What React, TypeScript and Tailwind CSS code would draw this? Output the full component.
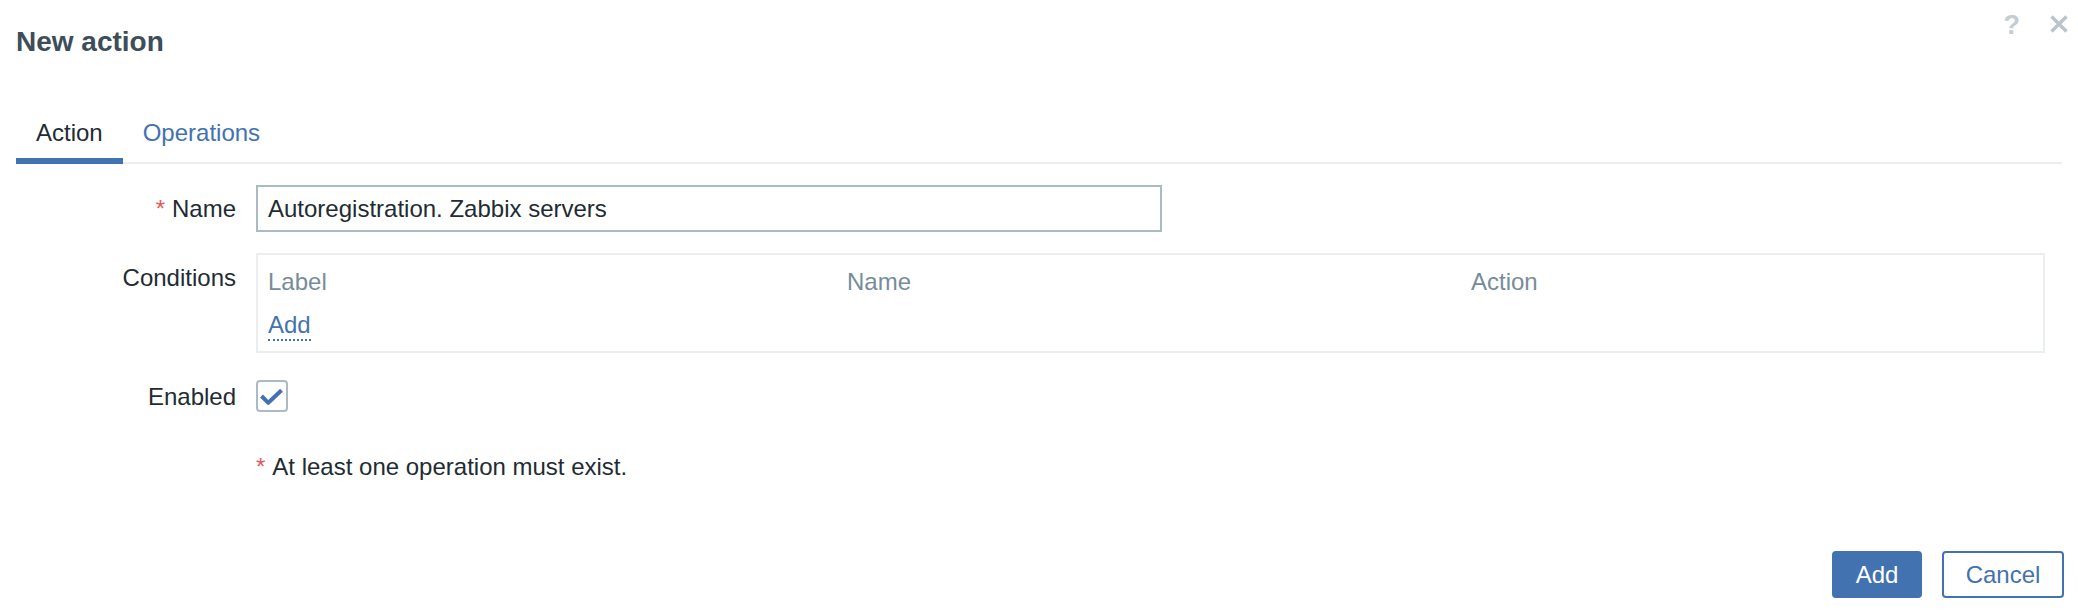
import React from "react";

function FormRow({
  label,
  required,
  labelClass,
  children,
}: {
  label: string;
  required?: boolean;
  labelClass: string;
  children: React.ReactNode;
}) {
  return (
    <div className="flex items-start">
      <div className={`w-[236px] shrink-0 text-right text-[24px] text-[#1f2c33] ${labelClass}`}>
        {required && <span className="text-[#e45959] mr-[7px]">*</span>}
        {label}
      </div>
      <div className="ml-[20px] flex-1">{children}</div>
    </div>
  );
}

export default function App() {
  return (
    <div
      className="w-[2078px] h-[612px] bg-white overflow-hidden"
      style={{ fontFamily: '"Liberation Sans", Arial, sans-serif' }}
    >
      {/* header */}
      <div className="flex justify-between items-start">
        <h4 className="pl-[16px] pt-[26px] text-[28px] leading-[32px] font-bold text-[#3e4d5a]">
          New action
        </h4>
        <div className="flex items-start gap-[30px] pt-[12px] pr-[10px]">
          <span className="text-[27px] leading-[26px] font-bold text-[#c3cdd2]">?</span>
          <svg width="18" height="18" viewBox="0 0 18 18" className="mt-[3px]">
            <path d="M1.5 1.5 L16.5 16.5 M16.5 1.5 L1.5 16.5" stroke="#bac5cb" strokeWidth="3.4" />
          </svg>
        </div>
      </div>

      {/* tabs */}
      <div className="mt-[61px] mx-[16px] flex border-b-2 border-[#ebeef0] text-[24px] leading-[28px]">
        <div className="px-[20px] pb-[11px] border-b-[6px] border-[#4273b1] -mb-[2px] text-[#1f2c33]">
          Action
        </div>
        <div className="px-[20px] pb-[11px] border-b-[6px] border-transparent -mb-[2px] text-[#4273b1]">
          Operations
        </div>
      </div>

      {/* form */}
      <div className="mt-[21px] flex flex-col">
        <FormRow label="Name" required labelClass="leading-[47px]">
          <div className="w-[906px] h-[47px] border-2 border-[#acbbc2] flex items-center pl-[10px] text-[24px] leading-[28px] text-[#1f2c33]">
            Autoregistration. Zabbix servers
          </div>
        </FormRow>

        <div className="mt-[21px]">
          <FormRow label="Conditions" labelClass="pt-[11px] leading-[28px]">
            <div className="w-[1789px] h-[100px] border-2 border-[#ebeef0] pt-[13px] px-[10px] text-[24px] leading-[28px]">
              <div className="flex text-[#768d99]">
                <span className="w-[579px]">Label</span>
                <span className="w-[624px]">Name</span>
                <span>Action</span>
              </div>
              <div className="mt-[15px] flex">
                <span className="border-b-2 border-dotted border-[#4273b1] text-[#4273b1]">Add</span>
              </div>
            </div>
          </FormRow>
        </div>

        <div className="mt-[27px]">
          <FormRow label="Enabled" labelClass="leading-[32px] pt-[1px]">
            <div className="w-[32px] h-[32px] border-2 border-[#acbbc2] rounded-[4px] bg-white">
              <svg width="28" height="28" viewBox="0 0 28 28">
                <path
                  d="M3.5 14 L10.3 20.8 L23.5 8.3"
                  fill="none"
                  stroke="#4273b1"
                  strokeWidth="4"
                  strokeLinejoin="round"
                />
              </svg>
            </div>
          </FormRow>
        </div>

        <div className="mt-[40px] ml-[256px] text-[24px] leading-[28px] text-[#1f2c33]">
          <span className="text-[#e45959] mr-[7px]">*</span>
          At least one operation must exist.
        </div>
      </div>

      {/* footer */}
      <div className="mt-[70px] flex justify-end gap-[20px] pr-[14px] text-[24px]">
        <button className="w-[90px] h-[47px] rounded-[4px] bg-[#4272b0] text-white">Add</button>
        <button className="w-[122px] h-[47px] rounded-[4px] border-2 border-[#4272b0] bg-white text-[#4272b0]">
          Cancel
        </button>
      </div>
    </div>
  );
}
